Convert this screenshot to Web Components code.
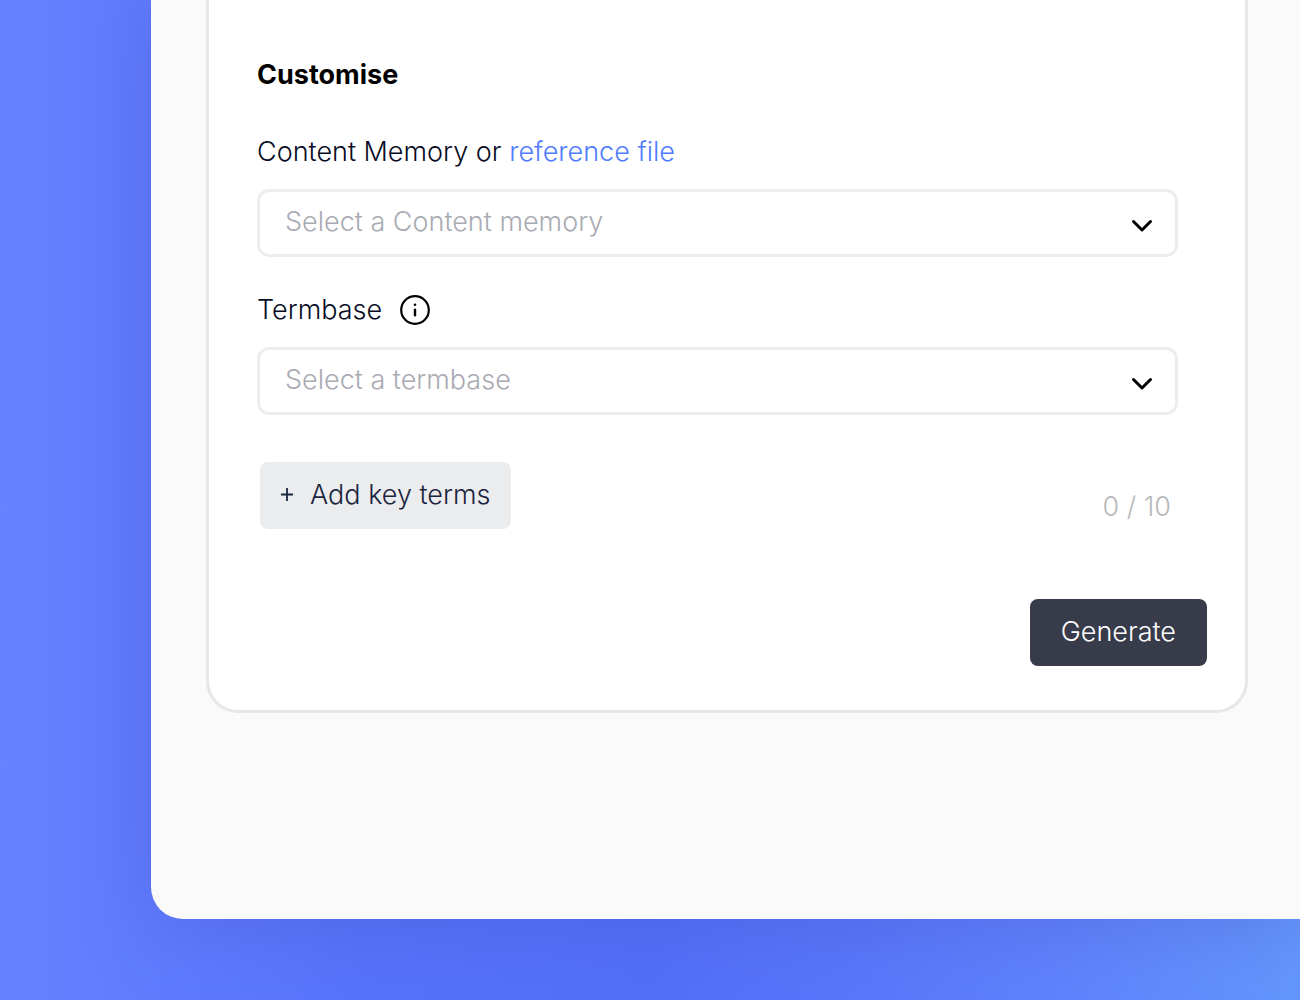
<!DOCTYPE html>
<html lang="en">
<head>
<meta charset="utf-8">
<meta name="viewport" content="width=device-width, initial-scale=1">
<title>Customise</title>
<style>
	html {
		--ink: #070c24;
		--muted: #a9abb3;
		--line: #ebedef;
		--link: #4f7cff;
	}

	body {
		margin: 0;
		font-family: Inter, "Liberation Sans", sans-serif;
		font-size: 27px;
		font-weight: 300;
		line-height: 32px;
		color: var(--ink);
	}

	a {
		color: var(--link);
		text-decoration: none;
	}
</style>
</head>
<body>
<app-window>
	<form-card>
		<span slot="title">Customise</span>
		<select-field placeholder="Select a Content memory">
			Content Memory or <a href="#reference">reference file</a>
		</select-field>
		<select-field placeholder="Select a termbase">
			Termbase
			<info-button slot="hint"></info-button>
		</select-field>
		<key-terms count="0" max="10"></key-terms>
		<primary-button slot="footer">Generate</primary-button>
	</form-card>
</app-window>

<script>
class BaseElement extends HTMLElement {
	constructor() {
		super();
		this.attachShadow({ mode: 'open' });
	}

	connectedCallback() {
		this.render();
	}

	render() {
		const template = document.createElement('template');
		template.innerHTML = this.markup();
		this.shadowRoot.innerHTML = '';
		this.shadowRoot.appendChild(template.content.cloneNode(true));
	}
}

class AppWindow extends BaseElement {
	markup() {
		return `
			<style>
				:host {
					display: block;
					box-sizing: border-box;
					min-height: 100vh;
					padding: 0 0 81px 151px;
					overflow: hidden;
					background: linear-gradient(90deg, #6583ff 0%, #607dff 10%, #5673fb 28%, #526ff9 50%, #5877fb 66%, #5f83fc 82%, #6496fc 100%);
				}

				main {
					box-sizing: border-box;
					min-height: 919px;
					padding: 0 52px 205px 55px;
					border-bottom-left-radius: 32px;
					background: #fafafa;
					box-shadow: 0 0 80px rgba(70, 80, 190, 0.4);
				}
			</style>

			<main><slot></slot></main>
		`;
	}
}

class FormCard extends BaseElement {
	markup() {
		return `
			<style>
				:host {
					display: block;
				}

				form {
					padding: 59px 38px 44px 48px;
					border: 3px solid #e7e7e8;
					border-top: 0;
					border-radius: 0 0 32px 32px;
					background: #fff;
				}

				h2 {
					margin: 0 0 45px;
					font-size: 27px;
					font-weight: 700;
					line-height: 32px;
					color: #000;
				}

				.fields {
					display: flex;
					flex-direction: column;
					gap: 37px;
					padding-right: 29px;
				}

				footer {
					display: flex;
					justify-content: flex-end;
					margin-top: 70px;
				}
			</style>

			<form>
				<h2><slot name="title"></slot></h2>
				<div class="fields"><slot></slot></div>
				<footer><slot name="footer"></slot></footer>
			</form>
		`;
	}
}

class SelectField extends BaseElement {
	markup() {
		return `
			<style>
				:host {
					display: block;
				}

				.head {
					display: flex;
					align-items: center;
					gap: 17px;
					margin-bottom: 21px;
				}

				.control {
					display: grid;
					align-items: center;
				}

				select,
				svg {
					grid-area: 1 / 1;
				}

				select {
					width: 100%;
					height: 68px;
					padding: 0 72px 2px 25px;
					border: 3px solid var(--line);
					border-radius: 12px;
					appearance: none;
					background: #fff;
					color: var(--muted);
					font: inherit;
				}

				svg {
					justify-self: end;
					width: 24px;
					height: 24px;
					margin: 5px 24px 0 0;
					pointer-events: none;
				}
			</style>

			<div class="head">
				<label for="control"><slot></slot></label>
				<slot name="hint"></slot>
			</div>
			<div class="control">
				<select id="control">
					<option value="">${this.getAttribute('placeholder')}</option>
				</select>
				<svg viewBox="0 0 24 24" fill="none" stroke="#000" stroke-width="3" stroke-linecap="round" stroke-linejoin="round" aria-hidden="true">
					<path d="M3.500 7.500l8.500 8.500L20.500 7.500"/>
				</svg>
			</div>
		`;
	}
}

class InfoButton extends BaseElement {
	markup() {
		return `
			<style>
				:host {
					display: flex;
				}

				button {
					display: flex;
					padding: 0;
					border: 0;
					background: none;
					cursor: pointer;
				}
			</style>

			<button type="button" aria-label="About termbases">
				<svg width="32" height="32" viewBox="0 0 32 32" fill="none" stroke="#000" aria-hidden="true">
					<circle cx="16" cy="16" r="13.800" stroke-width="2.200"/>
					<path d="M16 15.800v5.500" stroke-width="2.400" stroke-linecap="round"/>
					<circle cx="16" cy="10.800" r="1.300" fill="#000" stroke="none"/>
				</svg>
			</button>
		`;
	}
}

class KeyTerms extends BaseElement {
	markup() {
		return `
			<style>
				:host {
					display: flex;
					justify-content: space-between;
					align-items: flex-end;
					margin-top: 10px;
					padding: 0 7px 0 3px;
				}

				button {
					display: flex;
					align-items: center;
					gap: 16px;
					height: 67px;
					padding: 0 20px 2px;
					border: 0;
					border-radius: 8px;
					background: #ebecee;
					color: #1c2540;
					font: inherit;
				}

				output {
					margin-bottom: 6px;
					color: #b8b8bb;
				}
			</style>

			<button type="button">
				<svg width="14" height="14" viewBox="0 0 14 14" fill="none" stroke="currentColor" stroke-width="1.800" aria-hidden="true">
					<path d="M7 0v13M1 6.500h12"/>
				</svg>
				Add key terms
			</button>
			<output>${this.getAttribute('count')} / ${this.getAttribute('max')}</output>
		`;
	}
}

class PrimaryButton extends BaseElement {
	markup() {
		return `
			<style>
				:host {
					display: block;
				}

				button {
					height: 67px;
					padding: 0 31px 2px;
					border: 0;
					border-radius: 8px;
					background: #383b4a;
					color: #fff;
					font: inherit;
				}
			</style>

			<button type="button"><slot></slot></button>
		`;
	}
}

customElements.define('app-window', AppWindow);
customElements.define('form-card', FormCard);
customElements.define('select-field', SelectField);
customElements.define('info-button', InfoButton);
customElements.define('key-terms', KeyTerms);
customElements.define('primary-button', PrimaryButton);
</script>
</body>
</html>
